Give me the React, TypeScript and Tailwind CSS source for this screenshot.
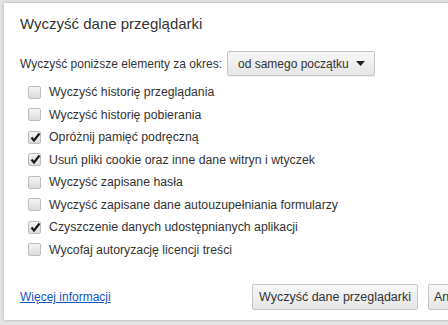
const items = [
  { label: "Wyczyść historię przeglądania", checked: false },
  { label: "Wyczyść historię pobierania", checked: false },
  { label: "Opróżnij pamięć podręczną", checked: true },
  { label: "Usuń pliki cookie oraz inne dane witryn i wtyczek", checked: true },
  { label: "Wyczyść zapisane hasła", checked: false },
  { label: "Wyczyść zapisane dane autouzupełniania formularzy", checked: false },
  { label: "Czyszczenie danych udostępnianych aplikacji", checked: true },
  { label: "Wycofaj autoryzację licencji treści", checked: false },
];

const Checkbox = ({ checked }: { checked: boolean }) => (
  <span className="relative flex h-[13px] w-[13px] shrink-0 items-center justify-center rounded-[2px] border border-[#bdbdbd] bg-gradient-to-b from-[#f4f4f4] to-[#dcdcdc]">
    {checked && (
      <svg width="11" height="11" viewBox="0 0 11 11" className="absolute left-[1px] top-0">
        <path d="M1.5 5.5 L4 8.5 L9.5 1.5" fill="none" stroke="#1a1a1a" strokeWidth="2.2" />
      </svg>
    )}
  </span>
);

export default function App() {
  return (
    <div
      className="relative h-[325px] w-[448px] overflow-hidden bg-[#e4e4e4] text-[#333]"
      style={{ fontFamily: '"Liberation Sans", Arial, sans-serif' }}
    >
      <div className="ml-[4px] mt-[3px] flex h-[317px] w-[474px] flex-col bg-white pl-[16px] shadow-[0_0_3px_rgba(0,0,0,0.25)]">
        <div className="mt-[11px] text-[15px] leading-[20px] text-[#333]">Wyczyść dane przeglądarki</div>

        <div className="mt-[17px] flex items-center text-[12px]">
          <span className="whitespace-nowrap">Wyczyść poniższe elementy za okres:</span>
          <div className="ml-[5px] flex h-[25px] w-[148px] items-center justify-between whitespace-nowrap rounded-[2px] border border-[#c6c6c6] bg-gradient-to-b from-[#f7f7f7] to-[#e6e6e6] pl-[10px] pr-[9px] text-[12px] shadow-[0_1px_0_rgba(0,0,0,0.05)]">
            <span>od samego początku</span>
            <svg width="9" height="5" viewBox="0 0 9 5">
              <path d="M0 0 H9 L4.5 5 Z" fill="#222" />
            </svg>
          </div>
        </div>

        <div className="mt-[5px] flex flex-col pl-[8px]">
          {items.map((it) => (
            <div key={it.label} className="flex h-[22.5px] items-center gap-[8px] text-[12.3px]">
              <Checkbox checked={it.checked} />
              <span className="whitespace-nowrap">{it.label}</span>
            </div>
          ))}
        </div>

        <div className="mt-auto mb-[10px] flex items-center">
          <a className="text-[12px] text-[#1155cc] underline">Więcej informacji</a>
          <div className="ml-auto flex gap-[10px]">
            <button className="h-[26px] w-[166px] whitespace-nowrap rounded-[2px] border border-[#c6c6c6] bg-gradient-to-b from-[#f7f7f7] to-[#e6e6e6] text-[12.5px] text-[#333]">
              Wyczyść dane przeglądarki
            </button>
            <button className="h-[26px] w-[50px] rounded-[2px] border border-[#c6c6c6] bg-gradient-to-b from-[#f7f7f7] to-[#e6e6e6] px-[5px] text-left text-[12.5px] text-[#333]">
              Anuluj
            </button>
          </div>
        </div>
      </div>
    </div>
  );
}
